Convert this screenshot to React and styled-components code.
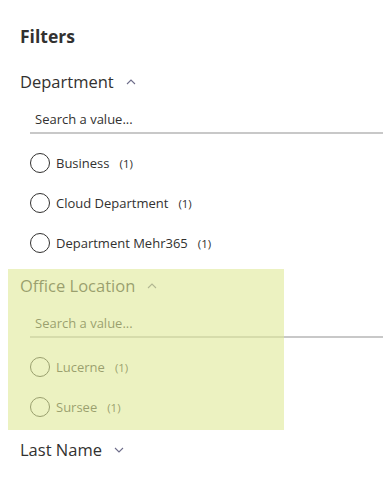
import React from "react";
import styled, { createGlobalStyle } from "styled-components";

const Global = createGlobalStyle`
  html, body { margin: 0; padding: 0; background: #ffffff; }
  body { font-family: "Segoe UI", "Open Sans", "Noto Sans", sans-serif; color: #323130; }
`;

const Panel = styled.div`
  width: 388px;
  height: 485px;
  box-sizing: border-box;
  padding: 0 5px 0 20px;
  overflow: hidden;
`;

const Title = styled.h2`
  margin: 0;
  height: 62px;
  box-sizing: border-box;
  padding-top: 23px;
  font-size: 17.5px;
  line-height: 26px;
  font-weight: 700;
  color: #323130;
`;

const Section = styled.section`
  position: relative;
  padding-bottom: ${(p) => (p.$open ? 3 : 0)}px;
  ${(p) =>
    p.$highlight &&
    `
    &::after {
      content: "";
      position: absolute;
      left: -12px;
      top: 3px;
      width: 276px;
      bottom: 0;
      background: rgba(224, 233, 152, 0.6);
      pointer-events: none;
    }
  `}
`;

const Header = styled.div`
  display: flex;
  align-items: center;
  gap: 12px;
  height: 40px;
  box-sizing: border-box;
  padding-bottom: 1px;
  font-size: 16.5px;
  color: #323130;
`;

const Chevron = styled.svg`
  width: 10px;
  height: 10px;
  margin-top: 1px;
  fill: none;
  stroke: #6e6d8a;
  stroke-width: 1.1;
`;

const SearchBox = styled.div`
  margin-left: 10px;
  height: 32px;
  box-sizing: border-box;
  border-bottom: 2px solid #c8c8c8;
  display: flex;
  align-items: center;
  padding: 3px 0 0 5px;
  font-size: 13px;
  color: #323130;
`;

const Options = styled.ul`
  list-style: none;
  margin: 9px 0 0 10px;
  padding: 0;
`;

const Option = styled.li`
  display: flex;
  align-items: center;
  height: 40px;
  font-size: 13px;
`;

const Radio = styled.span`
  width: 20px;
  height: 20px;
  box-sizing: border-box;
  border: 1px solid #323130;
  border-radius: 50%;
  margin-right: 6px;
  flex: none;
`;

const Count = styled.span`
  font-size: 11.5px;
  margin-left: 10px;
`;

const ChevronIcon = ({ up }) => (
  <Chevron viewBox="0 0 10 10">
    {up ? <polyline points="1,7 5,3 9,7" /> : <polyline points="1,3 5,7 9,3" />}
  </Chevron>
);

const sections = [
  { name: "Department", open: true, items: ["Business", "Cloud Department", "Department Mehr365"] },
  { name: "Office Location", open: true, highlight: true, items: ["Lucerne", "Sursee"] },
  { name: "Last Name", open: false, items: [] },
];

export default function App() {
  return (
    <>
      <Global />
      <Panel>
        <Title>Filters</Title>
        {sections.map((s) => (
          <Section key={s.name} $open={s.open} $highlight={s.highlight}>
            <Header>
              {s.name}
              <ChevronIcon up={s.open} />
            </Header>
            {s.open && (
              <>
                <SearchBox>Search a value...</SearchBox>
                <Options>
                  {s.items.map((it) => (
                    <Option key={it}>
                      <Radio />
                      {it}
                      <Count>(1)</Count>
                    </Option>
                  ))}
                </Options>
              </>
            )}
          </Section>
        ))}
      </Panel>
    </>
  );
}
